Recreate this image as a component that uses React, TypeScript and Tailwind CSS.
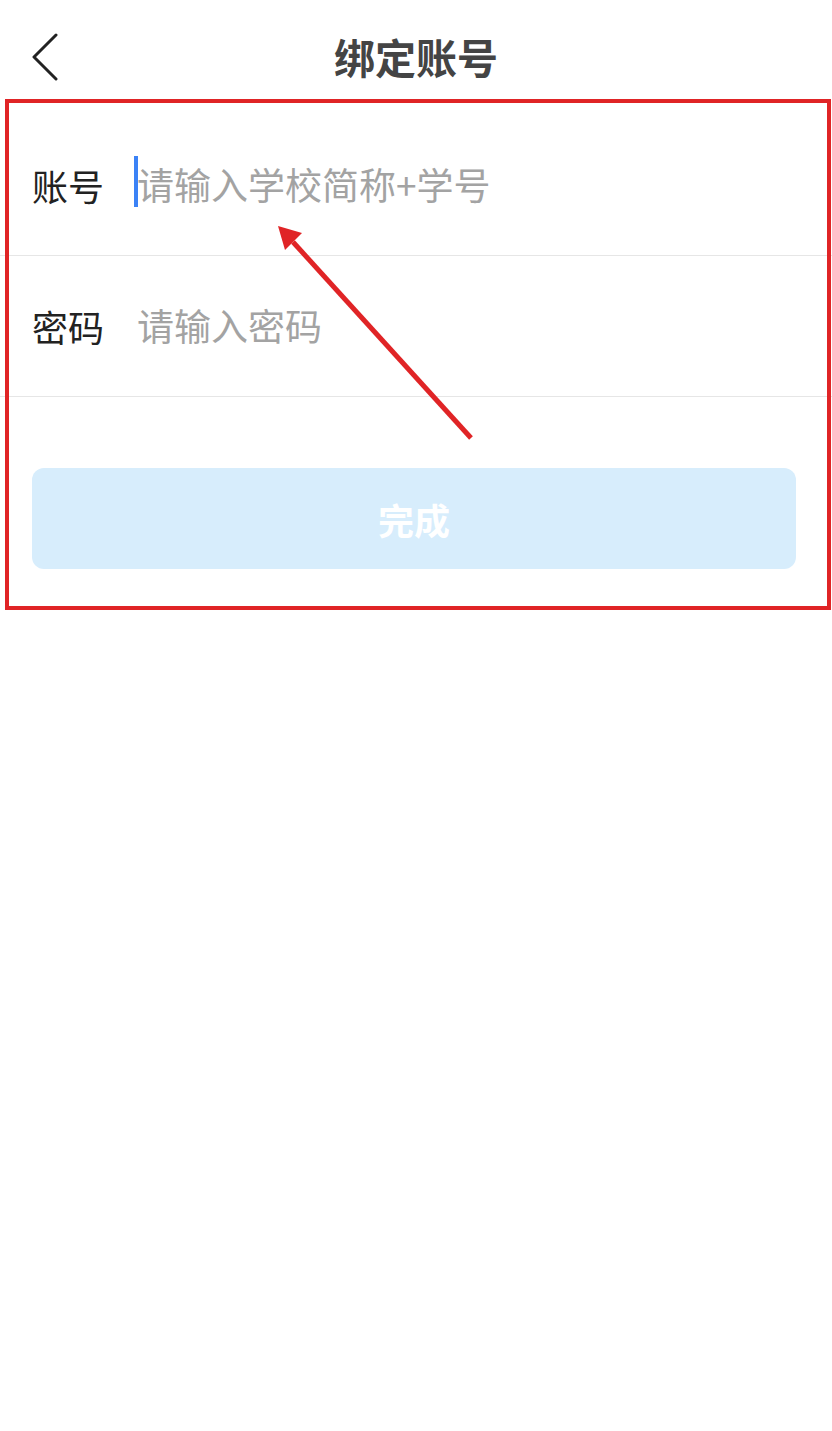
const font = { fontFamily: '"Noto Sans CJK SC", "Noto Sans", sans-serif' };

function Field({ label, placeholder, focused }: { label: string; placeholder: string; focused?: boolean }) {
  return (
    <div className="flex h-[141px] items-center border-b border-[#e6e6e6] pl-8">
      <span className="w-[105px] shrink-0 text-[36px] text-[#222]">{label}</span>
      <div className="relative flex items-center">
        {focused && <span className="absolute -left-[3px] top-[-1px] h-[51px] w-[4px] bg-[#3b82f6]" />}
        <span className="text-[37px] text-[#a3a3a3]">{placeholder}</span>
      </div>
    </div>
  );
}

export default function App() {
  return (
    <div className="relative min-h-[1431px] w-full bg-white" style={font}>
      {/* header */}
      <div className="relative flex h-[115px] items-center justify-center">
        <button className="absolute left-[30px] top-[33px]">
          <svg width="30" height="48" viewBox="0 0 30 48" fill="none">
            <polyline points="26,2 4,24 26,46" stroke="#222" strokeWidth="3" strokeLinecap="round" strokeLinejoin="round" />
          </svg>
        </button>
        <h1 className="-mt-[2px] text-[41px] font-bold text-[#444]">绑定账号</h1>
      </div>

      <Field label="账号" placeholder="请输入学校简称+学号" focused />
      <Field label="密码" placeholder="请输入密码" />

      <div className="pl-8 pr-9 pt-[71px]">
        <button className="flex h-[101px] w-full items-center justify-center rounded-[12px] bg-[#d7edfc] text-[36px] font-bold text-white">
          完成
        </button>
      </div>

      {/* annotation overlay */}
      <div className="pointer-events-none absolute left-[5px] top-[99px] h-[511px] w-[826px] border-4 border-[#e02426]" />
      <svg className="pointer-events-none absolute left-0 top-0" width="832" height="600">
        <line x1="471" y1="438" x2="293" y2="242" stroke="#e02426" strokeWidth="5" />
        <polygon points="278,226 302,233 285,250" fill="#e02426" />
      </svg>
    </div>
  );
}
